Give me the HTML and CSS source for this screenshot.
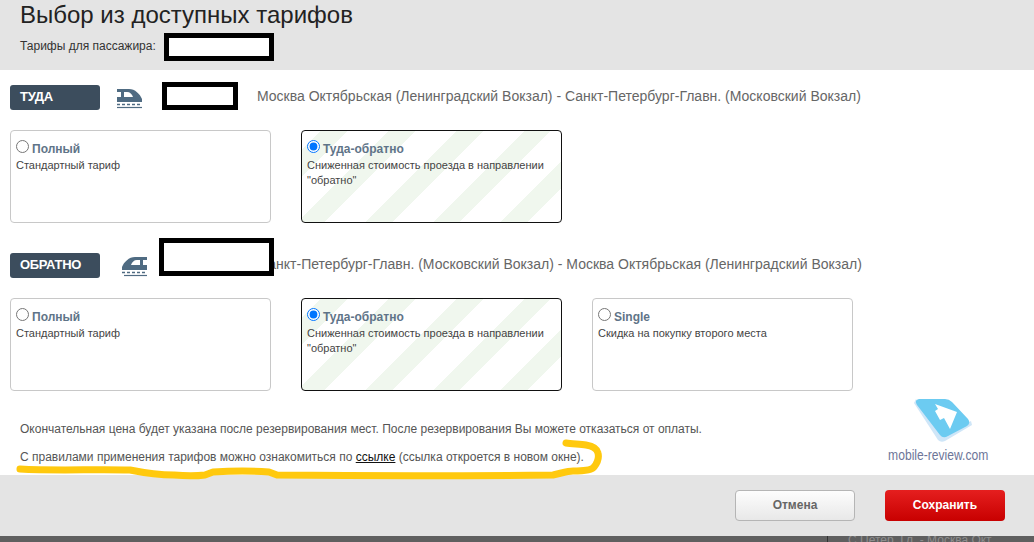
FILE: index.html
```html
<!DOCTYPE html>
<html lang="ru">
<head>
<meta charset="utf-8">
<title>Выбор из доступных тарифов</title>
<link rel="stylesheet" href="styles.css">
</head>
<body>
<div class="modal">
  <header class="head">
    <h1 class="title">Выбор из доступных тарифов</h1>
    <div class="passenger">Тарифы для пассажира:<span class="mask mask-passenger"></span></div>
  </header>
  <main class="body">
    <section class="leg leg-out">
      <div class="leg-head">
        <span class="badge">ТУДА</span>
        <svg class="train" viewBox="0 0 27 24" width="27" height="24"><path d="M1 3H13C19 3 24 8 26 13V16H1V11H17C16 8 14 6 11 6H8V11H5V6H1Z" fill="#4f6b82"/><path d="M1 18.500H26" stroke="#4f6b82" stroke-width="1.500" stroke-dasharray="3 2"/><path d="M1 21.500H26" stroke="#4f6b82" stroke-width="1.200"/></svg>
        <span class="route route-out">Москва Октябрьская (Ленинградский Вокзал) - Санкт-Петербург-Главн. (Московский Вокзал)</span>
        <span class="mask mask-out"></span>
      </div>
      <div class="cards">
        <label class="card">
          <span class="card-title"><input class="radio" type="radio" name="a">Полный</span>
          <span class="card-text">Стандартный тариф</span>
        </label>
        <label class="card card-on">
          <span class="card-title"><input class="radio" type="radio" name="a" checked>Туда-обратно</span>
          <span class="card-text">Сниженная стоимость проезда в направлении "обратно"</span>
        </label>
      </div>
    </section>
    <section class="leg leg-back">
      <div class="leg-head">
        <span class="badge">ОБРАТНО</span>
        <svg class="train train-back" viewBox="0 0 27 24" width="27" height="24"><path d="M25 3H13C7 3 2 8 0 13V16H25V11H9C10 8 12 6 15 6H18V11H21V6H25Z" fill="#4f6b82"/><path d="M0 18.500H25" stroke="#4f6b82" stroke-width="1.500" stroke-dasharray="3 2"/><path d="M2 21.500H25" stroke="#4f6b82" stroke-width="1.200"/></svg>
        <span class="route route-back">Санкт-Петербург-Главн. (Московский Вокзал) - Москва Октябрьская (Ленинградский Вокзал)</span>
        <span class="mask mask-back"></span>
      </div>
      <div class="cards">
        <label class="card">
          <span class="card-title"><input class="radio" type="radio" name="b">Полный</span>
          <span class="card-text">Стандартный тариф</span>
        </label>
        <label class="card card-on">
          <span class="card-title"><input class="radio" type="radio" name="b" checked>Туда-обратно</span>
          <span class="card-text">Сниженная стоимость проезда в направлении "обратно"</span>
        </label>
        <label class="card">
          <span class="card-title"><input class="radio" type="radio" name="b">Single</span>
          <span class="card-text">Скидка на покупку второго места</span>
        </label>
      </div>
    </section>
    <p class="note note-first">Окончательная цена будет указана после резервирования мест. После резервирования Вы можете отказаться от оплаты.</p>
    <p class="note">С правилами применения тарифов можно ознакомиться по <a class="link" href="#">ссылке</a> (ссылка откроется в новом окне).</p>
    <div class="watermark">
      <svg class="wm-logo" viewBox="0 0 72 56" width="72" height="56"><path d="M9 9 L33 46 Q36 49 40 47 L67 31 L66 27 L40 41 L11 5 Z" fill="#cfe6f8"/><path d="M14 5 H40 Q44 5 47 8 L63 25 Q66 29 62 32 L43 42 Q38 45 35 41 L12 11 Q9 6 14 5 Z" fill="#6ccbf1"/><path d="M30 10 L52 18 L45 35 L39 24 L35 26 L30 17 L33 15 Z" fill="#fff"/></svg>
      <span class="wm-text">mobile-review.com</span>
    </div>
  </main>
  <footer class="foot">
    <button class="btn btn-cancel" type="button">Отмена</button>
    <button class="btn btn-save" type="button">Сохранить</button>
  </footer>
  <svg class="marker" viewBox="0 0 1034 542" width="1034" height="542"><path d="M20 469 C55 471 95 469 130 470 C145 473 160 475 174 475 C185 476 197 476 205 475 L213 472 C230 471 255 471 269 472 L277 475 C360 476 470 476 553 475 C562 473 568 471 573 471 C585 471 592 470 594 467 C598 462 599 457 598 453 C597 448 592 446 586 445 C580 444 572 444 566 443" fill="none" stroke="#ffc90e" stroke-width="7" stroke-linecap="round" stroke-linejoin="round"/></svg>
</div>
<div class="under"><span class="under-text">С Петер. Гл. - Москва Окт.</span></div>
</body>
</html>
```
FILE: styles.css
```css
* { box-sizing: border-box; }
html, body { margin: 0; padding: 0; }
body {
  width: 1034px;
  height: 542px;
  overflow: hidden;
  font-family: "Liberation Sans", Arial, sans-serif;
  background: #5f5f5f;
  color: #333;
}
.modal { position: relative; width: 1034px; height: 536px; display: flex; flex-direction: column; background: #fff; }
.head { height: 70px; background: #e4e4e4; padding: 0 20px; flex: none; position: relative; }
.title { margin: 0; padding-top: 1px; font-size: 24px; line-height: 28px; font-weight: 400; color: #222; }
.passenger { margin-top: 10px; font-size: 12px; line-height: 14px; color: #333; }
.mask { position: absolute; background: #fff; border: 5px solid #000; }
.mask-passenger { left: 164px; top: 33px; width: 110px; height: 28px; }
.body { flex: 1; position: relative; padding: 0 10px; }
.leg { position: relative; }
.leg-out { padding-top: 15px; }
.leg-back { padding-top: 30px; }
.leg-head { display: flex; align-items: center; height: 25px; }
.badge { width: 90px; height: 25px; flex: none; background: #3c4d5d; color: #fff; font-size: 13px; letter-spacing: -0.300px; font-weight: 700; line-height: 24px; padding-left: 10px; border-radius: 3px; }
.train { flex: none; margin-left: 16px; }
.train-back { margin-left: 22px; }
.route { font-size: 14px; color: #666; white-space: nowrap; line-height: 20px; margin-bottom: 4px; }
.route-out { margin-left: 114px; }
.route-back { margin-left: 109px; }
.mask-out { left: 152px; top: 12px; width: 76px; height: 28px; }
.mask-back { left: 149px; top: 15px; width: 115px; height: 38px; }
.cards { display: flex; gap: 30px; margin-top: 20px; }
.card { display: block; width: 261px; height: 93px; border: 1px solid #c8c8c8; border-radius: 4px; padding: 7px 5px; font-size: 11px; line-height: 15px; }
.card-on { border-color: #111; background: repeating-linear-gradient(135deg, #fff 0 13px, #f0f7ee 13px 32px, #fff 32px 48px); }
.card-title { display: flex; align-items: flex-start; height: 16px; font-size: 12px; line-height: 22px; font-weight: 700; color: #5f7488; }
.radio { width: 13px; height: 13px; margin: 2px 3px 0 0; flex: none; }
.card-text { display: block; margin-top: 4px; color: #444; }
.note { margin: 0; padding-left: 10px; font-size: 12px; line-height: 14px; color: #555; }
.note-first { margin-top: 31px; }
.note + .note { margin-top: 14px; }
.link { color: #111; text-decoration: underline; }
.watermark { position: absolute; left: 883px; top: 324px; width: 110px; display: flex; flex-direction: column; align-items: center; }
.wm-logo { display: block; margin-left: 6px; }
.wm-text { font-size: 15.500px; color: #6d7598; white-space: nowrap; line-height: 16px; margin-top: -3px; transform: scaleX(0.780); }
.foot { height: 61px; flex: none; background: #e4e4e4; display: flex; justify-content: flex-end; align-items: center; gap: 30px; padding: 0 29px 0 0; }
.btn { width: 120px; height: 31px; border-radius: 4px; font-family: inherit; font-size: 12px; font-weight: 700; padding: 0 0 2px; }
.btn-cancel { border: 1px solid #b5b5b5; background: linear-gradient(#fdfdfd, #e8e8e8); color: #666; }
.btn-save { border: 0; background: linear-gradient(#e51f1f, #c80000); color: #fff; }
.marker { position: absolute; left: 0; top: 0; pointer-events: none; }
.under { height: 6px; overflow: hidden; padding-left: 827px; }
.under-text { display: block; height: 6px; border-left: 1px solid #333; padding-left: 20px; font-size: 12px; line-height: 8px; color: #8d8d8d; white-space: nowrap; }
```
